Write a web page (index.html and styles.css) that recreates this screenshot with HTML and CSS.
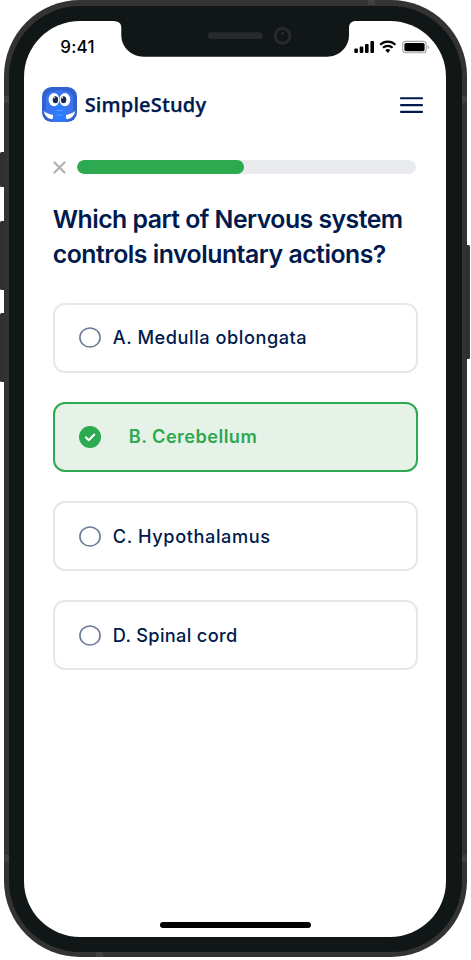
FILE: index.html
```html
<!DOCTYPE html>
<html lang="en">
<head>
<meta charset="utf-8">
<meta name="viewport" content="width=device-width, initial-scale=1">
<title>SimpleStudy</title>
<link rel="stylesheet" href="styles.css">
</head>
<body>
<div class="device">
  <i class="key key-mute"></i><i class="key key-up"></i><i class="key key-down"></i><i class="key key-power"></i>
  <i class="band band-lt"></i><i class="band band-rt"></i><i class="band band-lb"></i><i class="band band-rb"></i><i class="band band-top"></i><i class="band band-bottom"></i>
  <div class="bezel">
    <main class="screen">
      <svg class="notch" width="242" height="37" viewBox="0 0 242 37" aria-hidden="true">
        <path d="M0 0H242C237.500 0 235 2.500 235 7V14C235 26 225.500 35.700 213 35.700H30C17 35.700 7.300 26 7.300 14V7C7.300 2.500 5 .3 0 .3Z" fill="#111616"/>
        <rect x="94" y="11.300" width="54.500" height="6.700" rx="3.350" fill="#262a2c"/>
        <circle cx="168.500" cy="14.800" r="7.400" fill="#111616" stroke="#262a2c" stroke-width="3.200"/>
        <circle cx="168.500" cy="12.600" r="1.400" fill="#2c3033"/>
      </svg>
      <div class="status">
        <span class="time">9:41</span>
        <svg class="indicators" width="76" height="14" viewBox="0 0 76 14" aria-hidden="true">
          <g fill="#000">
            <rect x=".3" y="8.600" width="3.600" height="4.300" rx="1"/>
            <rect x="5.700" y="6.500" width="3.600" height="6.400" rx="1"/>
            <rect x="11" y="4" width="3.600" height="8.900" rx="1"/>
            <rect x="16.400" y="1" width="3.600" height="11.900" rx="1"/>
            <path d="M31.200 9.900a4.200 4.200 0 0 1 5.200 0L33.800 12.900Z"/>
          </g>
          <path d="M26.200 4.700a10.900 10.900 0 0 1 15.200 0M29 7.800a6.900 6.900 0 0 1 9.600 0" fill="none" stroke="#000" stroke-width="2.100"/>
          <rect x="48.700" y="1.400" width="23.500" height="11.400" rx="3" fill="none" stroke="#a6a6a6" stroke-width="1.100"/>
          <rect x="50.400" y="3" width="20.200" height="8.200" rx="1.600" fill="#000"/>
          <path d="M73.600 5v4.200q1.500-.5 1.500-2.100T73.600 5Z" fill="#aaa"/>
        </svg>
      </div>
      <header class="topbar">
        <svg class="mark" width="35" height="35" viewBox="0 0 35 35" aria-hidden="true">
          <rect width="35" height="35" rx="9.500" fill="#3161ce"/>
          <path d="M3.500 24C5 20 3 15 4 10Q5.500 4 12 4q5.500-2 11 0 6.500 0 8 6c1 5-1 10 .5 14L26 33q-1 2-4 2h-9q-3 0-4-2Z" fill="#3b74ee"/>
          <path d="M12 20q5.500-5 11 0l1.500 9q0 5-7 5.500Q10.500 34 10.500 29Z" fill="#2c7bff"/>
          <ellipse cx="12" cy="12.700" rx="5.400" ry="6.600" fill="#fff"/>
          <ellipse cx="22.900" cy="12.700" rx="5.400" ry="6.600" fill="#fff"/>
          <ellipse cx="13.400" cy="12.800" rx="2.700" ry="3.500" fill="#192653"/>
          <ellipse cx="21.600" cy="12.800" rx="2.700" ry="3.500" fill="#192653"/>
          <circle cx="12.200" cy="10.700" r=".8" fill="#fff"/>
          <circle cx="20.400" cy="10.700" r=".8" fill="#fff"/>
          <path d="M14.500 23.500h6M14.500 28h6" stroke="#5f9aff" stroke-width="1"/>
          <path d="M1.700 23.700q3 3 9.300 4.200v3.200q-.6 1.400-2.400 1Q3 30.500 1.700 23.700ZM33.300 23.700q-3 3-9.300 4.200v3.200q.6 1.400 2.400 1 5.600-1.600 6.900-8.400Z" fill="#fff"/>
        </svg>
        <span class="brand">SimpleStudy</span>
        <svg class="menu" width="23" height="18" viewBox="0 0 23 18" role="img" aria-label="Menu">
          <path d="M1 2.300H22M1 9.100H22M1 15.900H22" stroke="#001a4d" stroke-width="2.100" stroke-linecap="round"/>
        </svg>
      </header>
      <div class="progress-row">
        <svg class="close" width="13" height="13" viewBox="0 0 13 13" role="img" aria-label="Close">
          <path d="M1.500 1.500 11.500 11.500M11.500 1.500 1.500 11.500" stroke="#b1b1b1" stroke-width="2.200" stroke-linecap="round"/>
        </svg>
        <div class="track"><div class="fill"></div></div>
      </div>
      <h1><span class="line1">Which part of Nervous system</span><br><span class="line2">controls involuntary actions?</span></h1>
      <ul class="options">
        <li class="option"><svg class="radio" width="22" height="21" viewBox="0 0 22 21" aria-hidden="true"><ellipse cx="11" cy="10.500" rx="10.100" ry="9.500" fill="none" stroke="#6c7a98" stroke-width="1.600"/></svg><span class="label a">A. Medulla oblongata</span></li>
        <li class="option selected">
          <svg class="check" width="22" height="22" viewBox="0 0 22 22" aria-hidden="true"><circle cx="11" cy="11" r="11" fill="#2da94f"/><path d="M6.800 11.300 9.800 14.200 15.300 8.500" fill="none" stroke="#fff" stroke-width="2" stroke-linecap="round" stroke-linejoin="round"/></svg>
          <span class="label b">B. Cerebellum</span>
        </li>
        <li class="option"><svg class="radio" width="22" height="21" viewBox="0 0 22 21" aria-hidden="true"><ellipse cx="11" cy="10.500" rx="10.100" ry="9.500" fill="none" stroke="#6c7a98" stroke-width="1.600"/></svg><span class="label c">C. Hypothalamus</span></li>
        <li class="option"><svg class="radio" width="22" height="21" viewBox="0 0 22 21" aria-hidden="true"><ellipse cx="11" cy="10.500" rx="10.100" ry="9.500" fill="none" stroke="#6c7a98" stroke-width="1.600"/></svg><span class="label d">D. Spinal cord</span></li>
      </ul>
      <div class="home"></div>
    </main>
  </div>
</div>
</body>
</html>
```

FILE: styles.css
```css
* { box-sizing: border-box; }
body { margin: 0; background: #fff; font-family: Inter, "Liberation Sans", sans-serif; color: #001a4d; }
.device { position: relative; width: 463.2px; height: 957.3px; margin-left: 3.6px; padding: 5.5px 5.2px 5px; border-radius: 76px; background: #333; }
.bezel { position: relative; height: 100%; padding: 15.5px 15.5px 15.700px; border-radius: 71px; background: #111616; }
.screen { position: relative; display: flex; flex-direction: column; height: 100%; padding: 0 18px; border-radius: 56px; background: #fff; }
.key { position: absolute; left: -3.6px; width: 5px; background: #303030; border-radius: 1.500px 0 0 1.500px; }
.key-mute { top: 151.700px; height: 35.5px; }
.key-up { top: 221px; height: 69px; }
.key-down { top: 312.500px; height: 69px; }
.key-power { top: 245px; left: auto; right: -3.7px; height: 113.7px; border-radius: 0 1.500px 1.500px 0; }
.band { position: absolute; width: 5.2px; height: 6.700px; background: #414141; }
.band-lt, .band-lb { left: 0; }
.band-rt, .band-rb { right: 0; }
.band-lt, .band-rt { top: 96px; }
.band-lb, .band-rb { top: 855px; }
.band-top, .band-bottom { width: 6.700px; height: 5.2px; }
.band-top { top: 0; left: 364.4px; }
.band-bottom { bottom: 0; left: 92.4px; }
.notch { position: absolute; top: -.3px; left: 89.7px; }
.status { display: flex; justify-content: space-between; align-items: center; height: 52px; padding: 0 17px 0 18px; }
.time { font-size: 17px; font-weight: 500; line-height: 20px; letter-spacing: .2px; color: #000; }
.indicators { margin-right: -18.500px; }
.topbar { display: flex; align-items: center; height: 35px; margin-top: 14px; }
.mark { margin-left: -.6px; }
.brand { margin-left: 8px; font: 600 20px/30px "Open Sans", sans-serif; letter-spacing: .15px; -webkit-text-stroke: .25px #001a4d; }
.menu { margin: 0 5.500px 0 auto; }
.progress-row { display: flex; align-items: center; height: 14px; margin: 38px 12.500px 0 10.500px; }
.close { margin: 1px 11px 0 0; }
.track { flex: 1; height: 13.500px; overflow: hidden; border-radius: 7px; background: #e9eaee; }
.fill { width: 49.3%; height: 100%; border-radius: 7px; background: #2da94f; }
h1 { margin: 28px 0 0 10.500px; font-size: 24.800px; font-weight: 600; line-height: 35px; white-space: nowrap; }
.line1 { letter-spacing: -.52px; }
.line2 { letter-spacing: -.48px; }
.options { display: flex; flex-direction: column; gap: 29.300px; margin: 30.500px 10px 0 10.500px; padding: 0; list-style: none; }
.option { display: flex; align-items: center; height: 70px; padding-left: 24px; border: 2px solid #e6e7ed; border-radius: 12px; }
.selected { border-color: #2da94f; background: #e6f1e8; }
.label { margin-left: 12px; font-size: 18.200px; font-weight: 500; line-height: 27px; white-space: nowrap; }
.a { letter-spacing: .53px; }
.c { letter-spacing: .58px; }
.d { letter-spacing: .33px; }
.selected .label { margin-left: 28px; font-weight: 600; color: #2da94f; letter-spacing: .43px; }
.home { width: 151px; height: 5.700px; margin: auto auto 8.500px; border-radius: 3px; background: #000; }
```
